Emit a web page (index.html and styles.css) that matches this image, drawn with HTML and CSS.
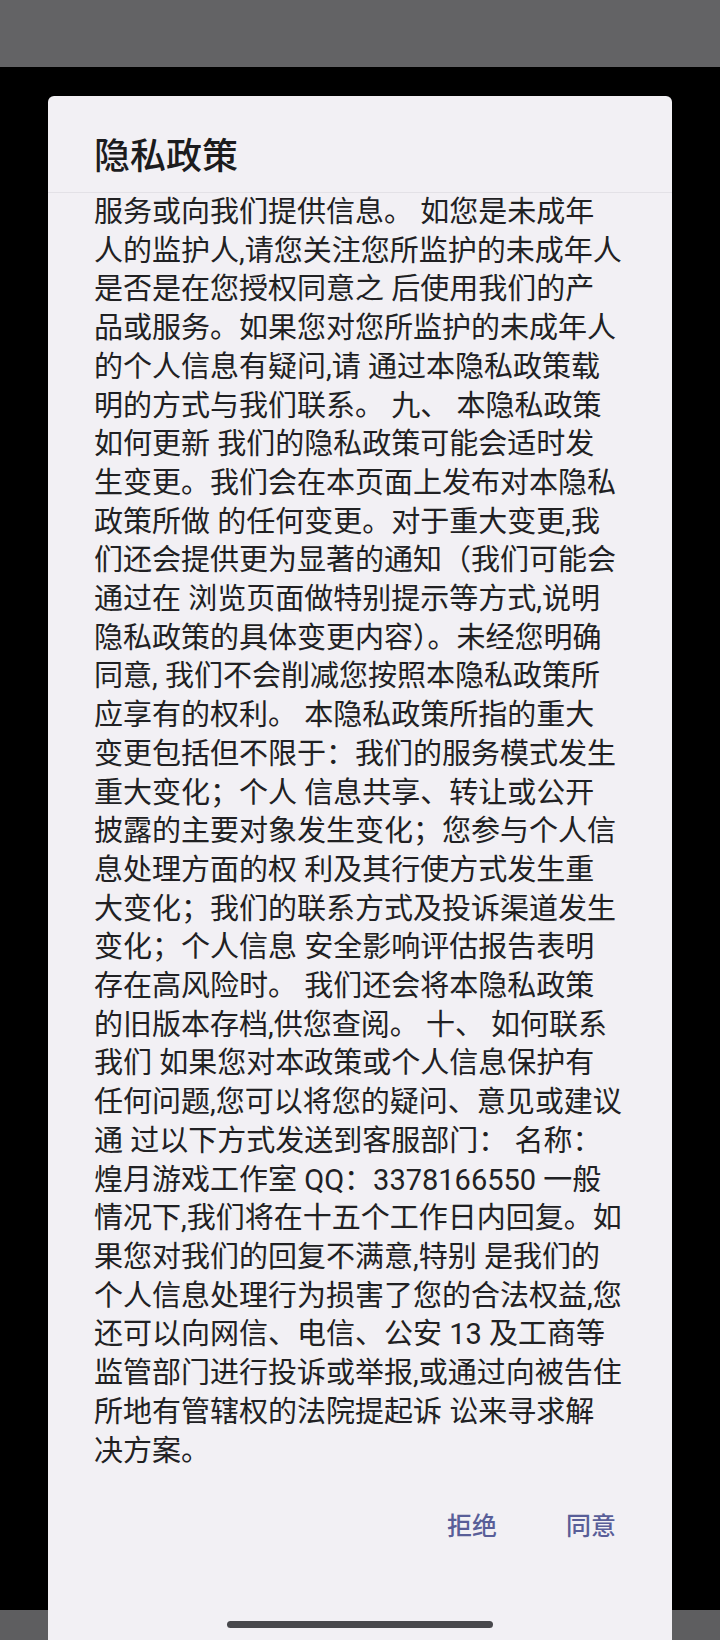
FILE: index.html
```html
<!DOCTYPE html>
<html lang="zh-CN">
<head>
<meta charset="utf-8">
<title>隐私政策</title>
<link rel="stylesheet" href="styles.css">
</head>
<body>
<div class="screen">
  <div class="statusbar"></div>
  <div class="navbar"></div>
  <section class="dialog">
    <header class="dialog-header">
      <h1 class="dialog-title">隐私政策</h1>
    </header>
    <div class="dialog-body">
      <p class="policy">服务或向我们提供信息。 如您是未成年<br>人的监护人,请您关注您所监护的未成年人<br>是否是在您授权同意之 后使用我们的产<br>品或服务。如果您对您所监护的未成年人<br>的个人信息有疑问,请 通过本隐私政策载<br>明的方式与我们联系。 九、 本隐私政策<br>如何更新 我们的隐私政策可能会适时发<br>生变更。我们会在本页面上发布对本隐私<br>政策所做 的任何变更。对于重大变更,我<br>们还会提供更为显著的通知（我们可能会<br>通过在 浏览页面做特别提示等方式,说明<br>隐私政策的具体变更内容）。未经您明确<br>同意, 我们不会削减您按照本隐私政策所<br>应享有的权利。 本隐私政策所指的重大<br>变更包括但不限于：我们的服务模式发生<br>重大变化；个人 信息共享、转让或公开<br>披露的主要对象发生变化；您参与个人信<br>息处理方面的权 利及其行使方式发生重<br>大变化；我们的联系方式及投诉渠道发生<br>变化；个人信息 安全影响评估报告表明<br>存在高风险时。 我们还会将本隐私政策<br>的旧版本存档,供您查阅。 十、 如何联系<br>我们 如果您对本政策或个人信息保护有<br>任何问题,您可以将您的疑问、意见或建议<br>通 过以下方式发送到客服部门： 名称：<br>煌月游戏工作室 QQ：3378166550 一般<br>情况下,我们将在十五个工作日内回复。如<br>果您对我们的回复不满意,特别 是我们的<br>个人信息处理行为损害了您的合法权益,您<br>还可以向网信、电信、公安 13 及工商等<br>监管部门进行投诉或举报,或通过向被告住<br>所地有管辖权的法院提起诉 讼来寻求解<br>决方案。</p>
    </div>
    <div class="dialog-actions">
      <button class="action" type="button">拒绝</button>
      <button class="action" type="button">同意</button>
    </div>
  </section>
  <div class="home-indicator"></div>
</div>
</body>
</html>
```
FILE: styles.css
```css
* {
  box-sizing: border-box;
}

html, body {
  margin: 0;
  padding: 0;
  background: #000;
}

.screen {
  position: relative;
  width: 720px;
  height: 1640px;
  overflow: hidden;
  display: grid;
  grid-template-rows: 67px 1fr 30px;
  grid-template-columns: 100%;
  background: #000;
  font-family: Roboto, "Noto Sans CJK SC", sans-serif;
}

.statusbar {
  grid-row: 1;
  grid-column: 1;
  background: #636365;
}

.navbar {
  grid-row: 3;
  grid-column: 1;
  background: #5e5e60;
}

.dialog {
  grid-row: 2 / span 2;
  grid-column: 1;
  z-index: 1;
  margin: 29px 48px 0;
  background: #f2f0f4;
  border-radius: 6px 6px 0 0;
  display: flex;
  flex-direction: column;
}

.dialog-header {
  padding: 33px 46px 15px;
  border-bottom: 1px solid #e3e1e6;
}

.dialog-title {
  margin: 0;
  font-size: 36px;
  line-height: 48px;
  font-weight: 500;
  color: #1c1c1e;
  font-family: "Noto Sans CJK SC", sans-serif;
}

.dialog-body {
  padding: 0 30px 0 46px;
}

.policy {
  margin: 0;
  font-size: 29px;
  line-height: 38.7px;
  color: #212123;
  white-space: nowrap;
}

.dialog-actions {
  display: flex;
  justify-content: flex-end;
  gap: 69px;
  padding: 0 56px;
  margin-top: 37px;
}

.action {
  border: 0;
  padding: 0;
  background: none;
  font-family: "Noto Sans CJK SC", sans-serif;
  font-size: 25px;
  line-height: 34px;
  font-weight: 500;
  color: #595e98;
}

.home-indicator {
  position: absolute;
  left: 227px;
  top: 1621px;
  width: 266px;
  height: 7px;
  border-radius: 4px;
  background: #48484c;
  z-index: 2;
}
```
